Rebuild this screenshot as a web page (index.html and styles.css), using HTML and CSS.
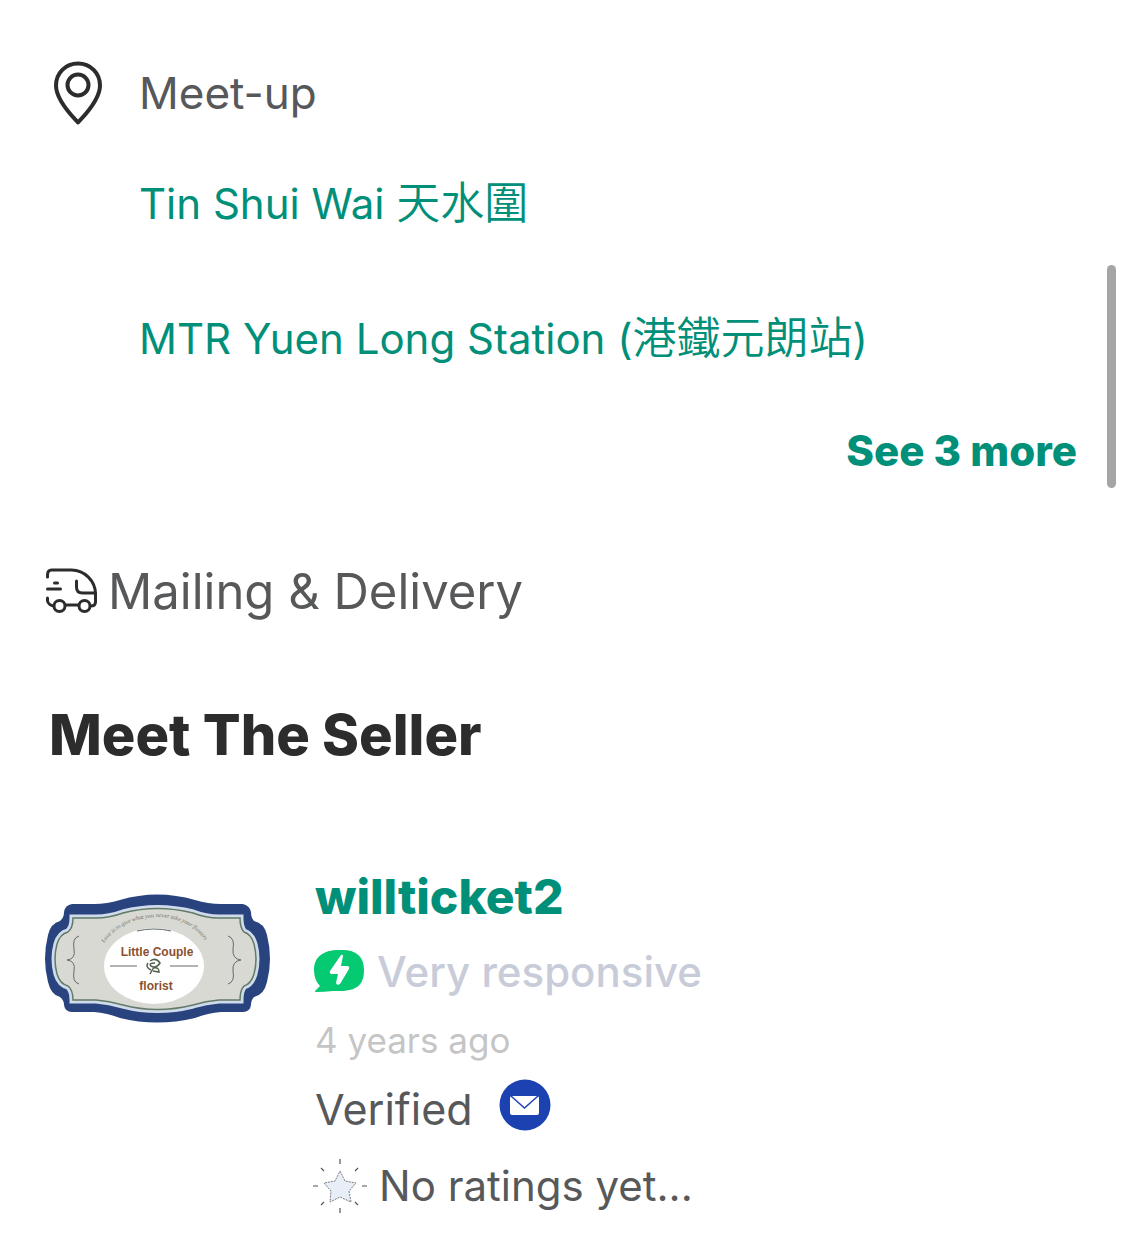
FILE: index.html
```html
<!DOCTYPE html>
<html lang="en">
<head>
<meta charset="utf-8">
<meta name="viewport" content="width=device-width, initial-scale=1">
<title>Meet The Seller</title>
<link rel="stylesheet" href="styles.css">
</head>
<body>
<main class="page">
  <section class="meetup">
    <div class="meetup-title">
      <svg class="pin-icon" viewBox="0 0 50 64" fill="none" stroke="#2c2c2d" stroke-width="4" stroke-linejoin="round" aria-hidden="true">
        <path d="M25 61.500 C21 57 3 40 3 24.500 C3 12 12.500 2.500 25 2.500 S47 12 47 24.500 C47 40 29 57 25 61.500Z"/>
        <circle cx="25" cy="24" r="10.500"/>
      </svg>
      <span>Meet-up</span>
    </div>
    <div class="places">
      <a class="place" href="#">Tin Shui Wai <span class="cjk" lang="zh-Hant">天水圍</span></a>
      <a class="place" href="#">MTR Yuen Long Station (<span class="cjk" lang="zh-Hant">港鐵元朗站</span>)</a>
    </div>
    <button class="more" type="button">See 3 more</button>
  </section>

  <section class="delivery">
    <svg class="van-icon" viewBox="0 0 52 46" fill="none" stroke="#2c2c2d" stroke-width="3" stroke-linecap="round" stroke-linejoin="round" aria-hidden="true">
      <path d="M2 8 V6 Q2 1 6 1 H26 C39 1 50 12 50 25 V33 Q50 37 45 37"/>
      <path d="M31 12 V18 Q31 24 37 24 H50M9 14 H12M2 20 H15M2 29 V32 Q3 36 8 37M20 36 H33"/>
      <circle cx="14" cy="37" r="5.500"/>
      <circle cx="39" cy="37" r="5.500"/>
    </svg>
    <span>Mailing &amp; Delivery</span>
  </section>

  <h1 class="heading">Meet The Seller</h1>

  <section class="seller">
    <svg class="avatar" viewBox="0 0 225 130" role="img" aria-label="Little Couple Florist">
      <defs>
        <path id="arc" d="M59 49 Q76 25 112 23 Q148 24 164 53"/>
      </defs>
      <path d="M27 10 H49 Q62 10 75 6 Q112 -5 150 6 Q163 10 176 10 H198 Q205 12 206 18 Q206 24 209 27 Q219 29 222 41 Q228 65 222 88 Q219 101 209 103 Q206 106 206 111 Q205 118 198 118 H176 Q163 119 150 124 Q112 133 75 124 Q62 119 49 118 H27 Q20 118 19 111 Q19 106 15 103 Q6 101 3 88 Q-3 65 3 41 Q6 29 15 27 Q19 24 19 18 Q20 11 27 10Z" fill="#29437f"/>
      <path d="M28 24 H51 Q64 24 78 19 Q112 10 148 19 Q161 24 174 24 H195 Q195 34 199 38 Q206 40 209 50 Q213 65 209 80 Q206 90 199 92 Q195 96 195 106 H174 Q161 107 148 111 Q112 120 78 111 Q64 107 51 106 H28 Q28 96 23 92 Q15 90 12 80 Q8 65 12 50 Q15 40 23 38 Q28 34 28 24Z" fill="#d7d9d2" stroke="#cfdbea" stroke-width="7"/>
      <path d="M28 24 H51 Q64 24 78 19 Q112 10 148 19 Q161 24 174 24 H195 Q195 34 199 38 Q206 40 209 50 Q213 65 209 80 Q206 90 199 92 Q195 96 195 106 H174 Q161 107 148 111 Q112 120 78 111 Q64 107 51 106 H28 Q28 96 23 92 Q15 90 12 80 Q8 65 12 50 Q15 40 23 38 Q28 34 28 24Z" fill="#d7d9d2" stroke="#637a68" stroke-width="1.500"/>
      <ellipse cx="109" cy="72" rx="50" ry="38" fill="#fff"/>
      <g fill="none" stroke="#626b70" stroke-width="1">
        <path d="M34 42 Q27 44 29 55 Q31 65 22 66 Q31 67 29 77 Q27 88 34 90M183 42 Q190 44 188 55 Q187 65 196 66 Q187 67 188 77 Q190 88 183 90"/>
        <path d="M92 37 Q109 33 126 37M65 72 H92M125 72 H153"/>
      </g>
      <text class="logo-motto"><textPath href="#arc">Love is to give what you never take your flowers</textPath></text>
      <text class="logo-name" x="112" y="62">Little Couple</text>
      <text class="logo-name" x="111" y="96">florist</text>
      <path d="M105 67 Q111 63 115 69 Q111 75 106 72 Q103 69 110 69M109 73 L105 80M109 74 Q114 73 114 78 L108 77M103 69 Q100 73 106 76" fill="none" stroke="#53614e" stroke-width="1.500"/>
    </svg>

    <div class="details">
      <a class="name" href="#">willticket2</a>
      <div class="line responsive">
        <svg class="bolt-icon" viewBox="0 0 52 44" aria-hidden="true">
          <path d="M24 0 C41 -1 49 6 49 20 C49 35 42 41 24 41 H18 Q9 42 1 42 Q-1 42 1 40 L5 36 Q-1 30 -1 20 C-1 7 8 0 24 0Z" fill="#05ca72"/>
          <path d="M26 5 Q28 4 28 6 L26 16 H33 Q35 17 34 19 L25 34 Q22 36 21 33 L23 24 H16 Q14 23 15 21Z" fill="#fff"/>
        </svg>
        <span>Very responsive</span>
      </div>
      <div class="line age">4 years ago</div>
      <div class="line verified">
        <span>Verified</span>
        <svg class="mail-icon" viewBox="0 0 52 52" role="img" aria-label="Email">
          <circle cx="26" cy="26" r="25.500" fill="#1b42b0"/>
          <rect x="11" y="17" width="29" height="19" rx="2" fill="#fff"/>
          <path d="M12 17 L25.500 29 L39 17" fill="none" stroke="#1b42b0" stroke-width="1.500"/>
        </svg>
      </div>
      <div class="line ratings">
        <svg class="star-icon" viewBox="0 0 54 54" fill="none" aria-hidden="true">
          <path d="M25 12 L30 22 L41 24 L34 32 L36 43 L25 38 L15 43 L16 32 L9 24 L20 22Z" fill="#e8eef8" stroke="#777b80" stroke-dasharray="2 1" stroke-linejoin="round"/>
          <path d="M25 0 V5M25 49 V54M-2 27 H3M47 27 H52M6 9 L9 12M43 9 L40 12M6 46 L9 43M43 46 L40 43" stroke="#555" stroke-width="1.200"/>
        </svg>
        <span>No ratings yet...</span>
      </div>
    </div>
  </section>
  <div class="scroll-thumb" aria-hidden="true"></div>
</main>
</body>
</html>
```
FILE: styles.css
```css
* { box-sizing: border-box; }

body {
  margin: 0;
  background: #fff;
  color: #57585a;
  font-family: Inter, "Noto Sans CJK TC", sans-serif;
  font-size: 42px;
  line-height: 60px;
}

a { color: #008f79; text-decoration: none; }
svg { overflow: visible; }

.page { position: relative; padding: 61px 48px 12px 45px; }

.meetup { display: flex; flex-direction: column; }

.meetup-title { display: flex; align-items: center; gap: 36px; padding-left: 8px; font-size: 44px; }
.pin-icon { width: 50px; height: 64px; }

.places {
  display: flex;
  flex-direction: column;
  align-items: flex-start;
  gap: 75px;
  padding: 49px 0 52px 94px;
}
.cjk { font-family: "Noto Sans CJK TC", sans-serif; font-size: 44px; font-weight: 350; line-height: 1; }

.more {
  align-self: flex-end;
  padding: 0;
  border: 0;
  background: none;
  color: #008f79;
  font: inherit;
  font-weight: 800;
}

.delivery { display: flex; align-items: center; gap: 10px; margin-top: 81px; font-size: 49px; }
.van-icon { width: 53px; height: 46px; }

.heading { margin: 73px 0 92px 4px; color: #2c2c2d; font-size: 56px; font-weight: 800; line-height: 80px; }

.seller { display: flex; gap: 45px; }
.avatar { flex: none; width: 225px; height: 130px; margin-top: 27px; }
.logo-name { fill: #8a5130; font: 700 12px "Liberation Sans", sans-serif; text-anchor: middle; }
.logo-motto { fill: #70736c; font: italic 6px "Liberation Serif", serif; }

.details { display: flex; flex-direction: column; }
.name { font-size: 48px; font-weight: 800; }
.line { display: flex; align-items: center; }
.responsive { gap: 10px; margin-top: 15px; color: #c8ccd9; font-weight: 500; }
.bolt-icon { width: 52px; height: 44px; }
.age { margin-top: 8px; color: #c5c5c6; font-size: 35px; }
.verified { align-items: flex-start; gap: 26px; margin-top: 9px; font-size: 43px; }
.mail-icon { width: 52px; height: 52px; }
.ratings { gap: 10px; margin-top: 17px; }
.star-icon { width: 54px; height: 54px; }

.scroll-thumb {
  position: absolute;
  top: 265px;
  right: 9px;
  width: 9px;
  height: 223px;
  border-radius: 5px;
  background: #a5a5a5;
}
```
